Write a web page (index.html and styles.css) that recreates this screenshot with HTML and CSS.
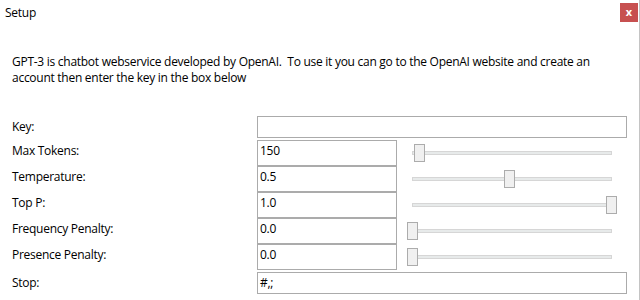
FILE: index.html
```html
<!DOCTYPE html>
<html>
<head>
<meta charset="utf-8">
<link rel="stylesheet" href="styles.css">
</head>
<body>
<div class="window">
  <div class="titlebar">
    <span class="title">Setup</span>
    <div class="close">x</div>
  </div>
  <p class="intro">GPT-3 is chatbot webservice developed by OpenAI.&nbsp; To use it you can go to the OpenAI website and create an account then enter the key in the box below</p>
  <div class="form">
    <div class="label">Key:</div>
    <div class="field wide"><div class="box short"></div></div>

    <div class="label">Max Tokens:</div>
    <div class="field"><div class="box">150</div></div>
    <div class="slidercell"><div class="slider"><div class="track"></div><div class="thumb" style="left:2px"></div></div></div>

    <div class="label">Temperature:</div>
    <div class="field"><div class="box">0.5</div></div>
    <div class="slidercell"><div class="slider"><div class="track"></div><div class="thumb" style="left:92px"></div></div></div>

    <div class="label">Top P:</div>
    <div class="field"><div class="box">1.0</div></div>
    <div class="slidercell"><div class="slider"><div class="track"></div><div class="thumb" style="left:194px"></div></div></div>

    <div class="label">Frequency Penalty:</div>
    <div class="field"><div class="box">0.0</div></div>
    <div class="slidercell left"><div class="slider"><div class="track"></div><div class="thumb" style="left:0px"></div></div></div>

    <div class="label">Presence Penalty:</div>
    <div class="field"><div class="box">0.0</div></div>
    <div class="slidercell left"><div class="slider"><div class="track"></div><div class="thumb" style="left:0px"></div></div></div>

    <div class="label stoplabel">Stop:</div>
    <div class="field wide stopfield"><div class="box short">#,;</div></div>
  </div>
</div>
</body>
</html>
```

FILE: styles.css
```css
html, body {
  margin: 0;
  padding: 0;
  background: #ffffff;
}
body {
  font-family: "Open Sans", "Noto Sans", sans-serif;
  font-size: 12px;
  letter-spacing: -0.27px;
  color: #000;
}
.window {
  width: 639px;
  height: 300px;
  border-right: 1px solid #c4c4c4;
  box-sizing: content-box;
}
.titlebar {
  height: 30px;
  display: flex;
  justify-content: space-between;
  align-items: flex-start;
}
.title {
  margin: 3px 0 0 5px;
  line-height: 20px;
}
.close {
  margin: 3px 1px 0 0;
  width: 18px;
  height: 19px;
  background: #c75050;
  color: #fff;
  font-weight: bold;
  font-size: 11px;
  line-height: 18px;
  text-align: center;
  letter-spacing: 0;
}
.intro {
  margin: 24px 20px 0 12px;
  line-height: 16px;
}
.form {
  margin: 30px 0 0 12px;
  display: grid;
  grid-template-columns: 245px 140px 230px;
  grid-template-rows: 24px repeat(5, 26px) 24px;
}
.label {
  line-height: 20px;
  padding-top: 1px;
}
.field.wide {
  grid-column: 2 / span 2;
}
.box {
  box-sizing: border-box;
  width: 140px;
  height: 26px;
  border: 1px solid #ababab;
  padding: 1px 0 0 2px;
  line-height: 18px;
}
.box.short {
  width: 370px;
  height: 22px;
}
.stopfield {
  padding-top: 2px;
}
.stoplabel {
  padding-top: 3px;
}
.slidercell {
  display: flex;
  align-items: center;
  padding-left: 15px;
}
.slidercell.left {
  padding-left: 10px;
}
.slider {
  position: relative;
  width: 200px;
  height: 18px;
}
.slidercell.left .slider {
  width: 205px;
}
.track {
  position: absolute;
  left: 0;
  right: 0;
  top: 7px;
  height: 4px;
  box-sizing: border-box;
  background: #e7eaea;
  border: 1px solid #d6d6d6;
}
.thumb {
  position: absolute;
  top: 0;
  width: 11px;
  height: 18px;
  box-sizing: border-box;
  background: #f0f0f0;
  border: 1px solid #acacac;
}
```
